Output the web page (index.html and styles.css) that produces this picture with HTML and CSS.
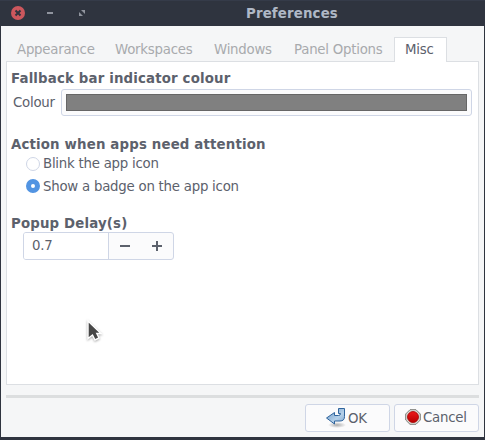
FILE: index.html
```html
<!DOCTYPE html>
<html lang="en">
<head>
<meta charset="utf-8">
<title>Preferences</title>
<link rel="stylesheet" href="styles.css">
</head>
<body>
<div class="window">
  <header class="titlebar">
    <svg class="controls" width="100" height="26" viewBox="0 0 100 26">
      <circle cx="18" cy="13" r="7" fill="#cc575d"/>
      <path d="M15.5 10.5l5 5M20.5 10.5l-5 5" stroke="#2f343f" stroke-width="2"/>
      <path d="M47 12h6v2h-6z" fill="#90949e"/>
      <path d="M81 10h4v4zM79 12v4h4z" fill="#90949e"/>
    </svg>
    <h1 class="title">Preferences</h1>
  </header>
  <main class="content">
    <nav class="tabs">
      <span class="tab appearance">Appearance</span>
      <span class="tab workspaces">Workspaces</span>
      <span class="tab windows">Windows</span>
      <span class="tab options">Panel Options</span>
      <span class="tab active">Misc</span>
    </nav>
    <section class="panel">
      <h2 class="heading">Fallback bar indicator colour</h2>
      <div class="colour-row"><span>Colour</span><button class="colour"><i></i></button></div>
      <h2 class="heading attention">Action when apps need attention</h2>
      <label class="radio"><i class="dot"></i><span>Blink the app icon</span></label>
      <label class="radio"><i class="dot checked"></i><span>Show a badge on the app icon</span></label>
      <h2 class="heading delay">Popup Delay(s)</h2>
      <div class="spin">
        <span class="value">0.7</span>
        <svg class="steps" width="64" height="26" viewBox="0 0 64 26"><path d="M11 12h10v2H11zM43 12h10v2H43zM47 8h2v10h-2z" fill="#5c616c"/></svg>
      </div>
    </section>
    <div class="separator"></div>
    <footer class="actions">
      <button class="button ok">
        <svg width="22" height="22" viewBox="0 0 22 22">
          <defs>
            <linearGradient id="blue" x2="1" y2="1"><stop offset="0" stop-color="#6694c4"/><stop offset=".6" stop-color="#b5d0e9"/><stop offset="1" stop-color="#7fa8d0"/></linearGradient>
            <radialGradient id="shade"><stop offset="0" stop-color="#777" stop-opacity=".6"/><stop offset="1" stop-color="#777" stop-opacity="0"/></radialGradient>
          </defs>
          <ellipse cx="12" cy="18" rx="9" ry="3" fill="url(#shade)"/>
          <path d="M1.5 11L9.5 5.5V8.5H13.5Q15.5 8.5 15.5 6.5H13.5V1.5H19.5V9.5Q19.5 14 15 14H9.5V17Z" fill="url(#blue)" stroke="#2f649d" stroke-linejoin="round"/>
        </svg><span>OK</span>
      </button>
      <button class="button cancel">
        <svg width="16" height="16" viewBox="0 0 16 16">
          <defs><linearGradient id="red" x2="0" y2="1"><stop offset="0" stop-color="#ee1a1a"/><stop offset="1" stop-color="#b90000"/></linearGradient></defs>
          <path d="M5 .7h6L15.3 5v6L11 15.3H5L.7 11V5z" fill="#deded8" stroke="#7c7d79"/>
          <circle cx="8" cy="8" r="5.5" fill="url(#red)" stroke="#a40000" stroke-width=".8"/>
        </svg><span>Cancel</span>
      </button>
    </footer>
  </main>
  <svg class="cursor" width="22" height="28" viewBox="0 0 22 28"><path d="M5 3V20.5L9.5 17L12 22L16 20L13.8 15.5H18Z" fill="#474747" stroke="#fff" stroke-width="1.4"/></svg>
</div>
</body>
</html>
```
FILE: styles.css
```css
* { box-sizing: border-box; }
body { margin: 0; font: 13.33px/16px "DejaVu Sans", sans-serif; letter-spacing: -.24px; color: #5c616c; }
.window { position: relative; width: 485px; height: 440px; background: #2f343f; overflow: hidden; }
.titlebar { height: 26px; display: flex; border-top: 1px solid #353b49; }
.controls { flex: none; margin-top: -1px; }
.title { margin: 5px 0 0 146px; font: bold 13.33px/16px "DejaVu Sans", sans-serif; letter-spacing: .16px; color: #afb8c6; }
.content { margin: 0 1px; height: 411px; padding: 11px 5px 0; background: #f5f6f7; }
.tabs { display: flex; height: 25px; padding-left: 11px; margin-bottom: -1px; line-height: 25px; color: #a8aaad; position: relative; }
.tab { flex: none; white-space: nowrap; }
.appearance { width: 98px; }
.workspaces { width: 99px; }
.windows { width: 80px; }
.options { width: 100px; }
.active { width: 53px; padding-left: 10px; line-height: 23px; border: 1px solid #dcdfe3; border-bottom: 0; background: #fff; color: #5c616c; }
.panel { height: 324px; padding: 9px 6px 0 4px; border: 1px solid #dcdfe3; background: #fff; }
.heading { margin: 0; font: bold 13.33px/16px "DejaVu Sans", sans-serif; letter-spacing: .16px; }
.colour-row { display: flex; align-items: center; gap: 6px; height: 27px; margin: 2px 0 0 2px; }
.colour-row span { width: 42px; }
.colour { flex: 1; height: 27px; padding: 4px; border: 1px solid #cfd6e6; border-radius: 3px; background: #fbfbfc; }
.colour i { display: block; height: 17px; border: 1px solid #666; background: #808080; }
.attention { margin-top: 21px; }
.radio { display: flex; align-items: center; gap: 3px; height: 23px; margin-left: 15px; }
.attention + .radio { height: 22px; }
.dot { width: 14px; height: 14px; margin-top: -1px; border: 1px solid #cfd6e6; border-radius: 50%; }
.checked { border: 5px solid #5294e2; background: #fff; }
.delay { margin-top: 18px; }
.spin { display: flex; width: 151px; height: 28px; margin: 0 0 0 12px; border: 1px solid #cfd6e6; border-radius: 3px; background: #fbfbfc; }
.value { width: 85px; padding-left: 8px; line-height: 25px; border-right: 1px solid #cfd6e6; background: #fff; border-radius: 2px 0 0 2px; }
.steps { flex: none; }
.separator { height: 3px; margin-top: 10px; background: #dcdedf; }
.actions { display: flex; justify-content: flex-end; gap: 4px; margin-top: 6px; }
.button { display: flex; width: 85px; height: 28px; padding: 0; font: inherit; letter-spacing: inherit; color: inherit; border: 1px solid #cfd6e6; border-radius: 3px; background: #fbfbfc; align-items: center; }
.ok { padding-left: 19px; }
.ok span { margin: 2px 0 0 1px; }
.cancel { padding-left: 10px; gap: 2px; }
.cancel svg { margin-top: -2px; }
.cursor { position: absolute; left: 83px; top: 318px; filter: drop-shadow(0 1px 1px #0005); }
```
